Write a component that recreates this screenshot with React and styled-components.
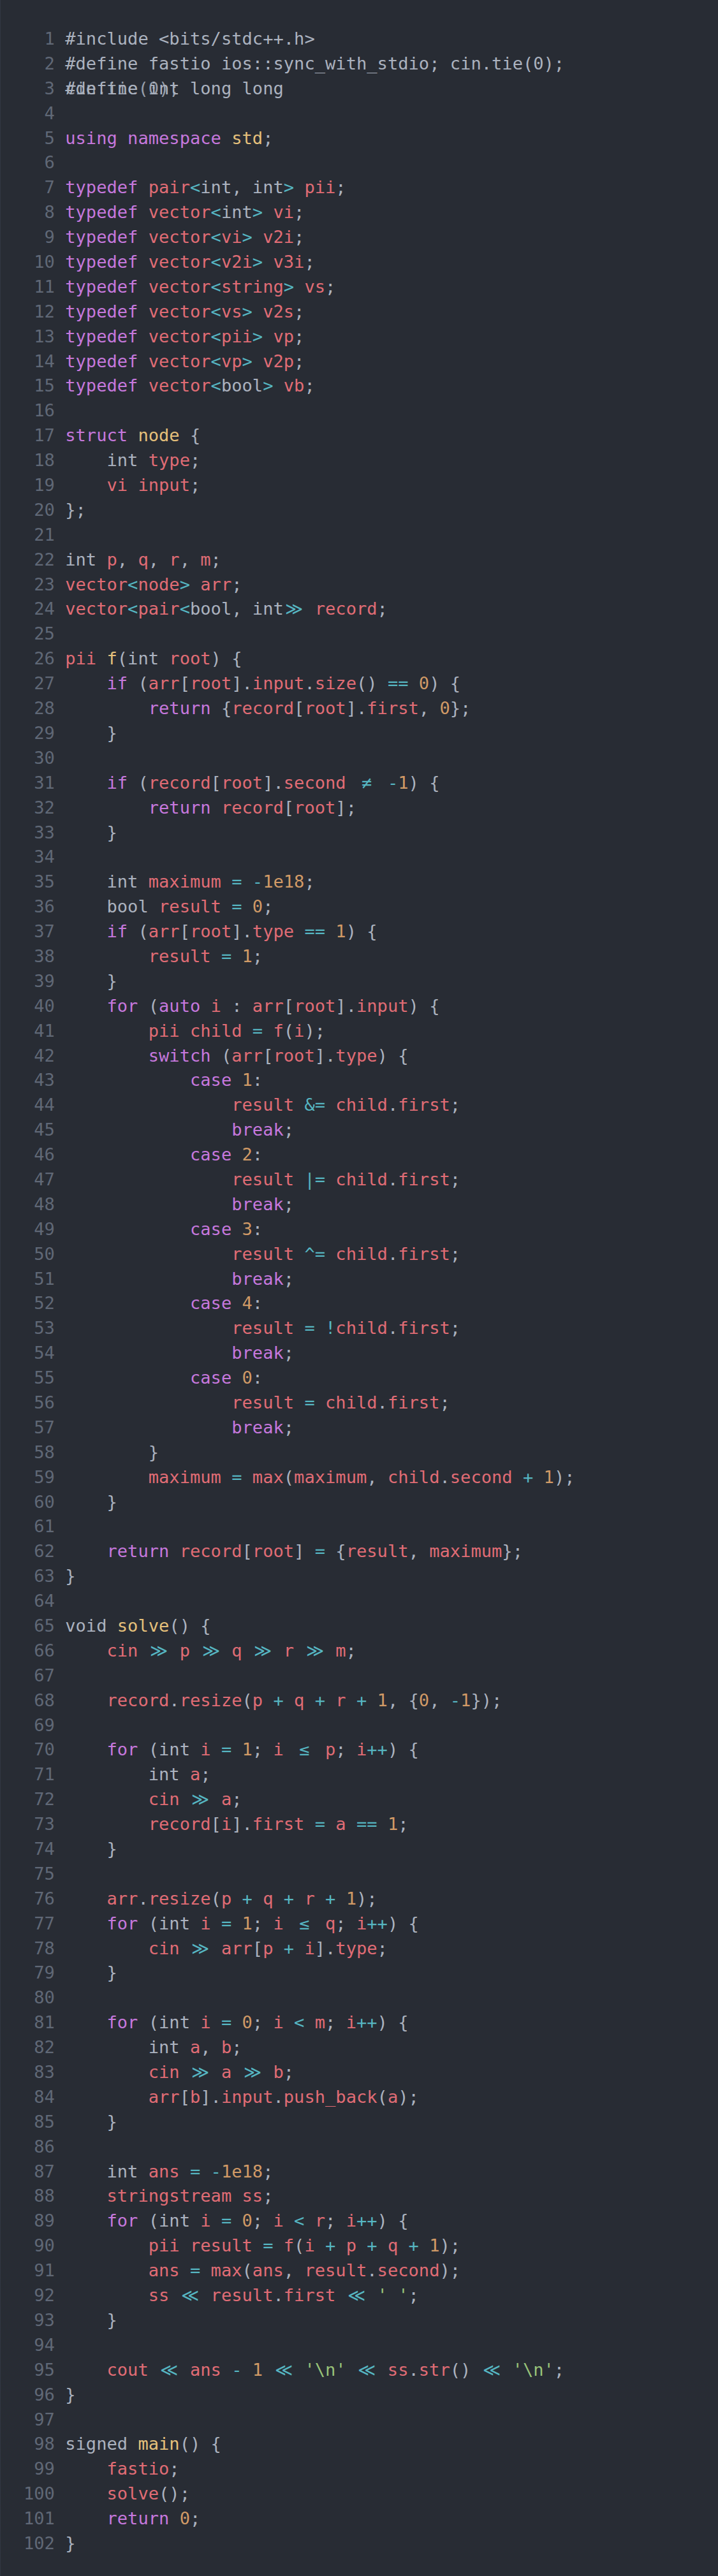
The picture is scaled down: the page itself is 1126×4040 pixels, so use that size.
import React from 'react';
import styled, { createGlobalStyle } from 'styled-components';

const GlobalStyle = createGlobalStyle`
  * {
    box-sizing: border-box;
  }
  html, body {
    margin: 0;
    padding: 0;
    background: #282c34;
  }
`;

const SOURCE = `#include <bits/stdc++.h>
#define fastio ios::sync_with_stdio; cin.tie(0);
#define int long long

using namespace std;

typedef pair<int, int> pii;
typedef vector<int> vi;
typedef vector<vi> v2i;
typedef vector<v2i> v3i;
typedef vector<string> vs;
typedef vector<vs> v2s;
typedef vector<pii> vp;
typedef vector<vp> v2p;
typedef vector<bool> vb;

struct node {
    int type;
    vi input;
};

int p, q, r, m;
vector<node> arr;
vector<pair<bool, int>> record;

pii f(int root) {
    if (arr[root].input.size() == 0) {
        return {record[root].first, 0};
    }

    if (record[root].second != -1) {
        return record[root];
    }

    int maximum = -1e18;
    bool result = 0;
    if (arr[root].type == 1) {
        result = 1;
    }
    for (auto i : arr[root].input) {
        pii child = f(i);
        switch (arr[root].type) {
            case 1:
                result &= child.first;
                break;
            case 2:
                result |= child.first;
                break;
            case 3:
                result ^= child.first;
                break;
            case 4:
                result = !child.first;
                break;
            case 0:
                result = child.first;
                break;
        }
        maximum = max(maximum, child.second + 1);
    }

    return record[root] = {result, maximum};
}

void solve() {
    cin >> p >> q >> r >> m;

    record.resize(p + q + r + 1, {0, -1});

    for (int i = 1; i <= p; i++) {
        int a;
        cin >> a;
        record[i].first = a == 1;
    }

    arr.resize(p + q + r + 1);
    for (int i = 1; i <= q; i++) {
        cin >> arr[p + i].type;
    }

    for (int i = 0; i < m; i++) {
        int a, b;
        cin >> a >> b;
        arr[b].input.push_back(a);
    }

    int ans = -1e18;
    stringstream ss;
    for (int i = 0; i < r; i++) {
        pii result = f(i + p + q + 1);
        ans = max(ans, result.second);
        ss << result.first << ' ';
    }

    cout << ans - 1 << '\\n' << ss.str() << '\\n';
}

signed main() {
    fastio;
    solve();
    return 0;
}`;

const KEYWORDS = new Set([
  'typedef', 'using', 'namespace', 'struct', 'if', 'return', 'for',
  'switch', 'case', 'break', 'auto',
]);
const TYPES = new Set(['int', 'bool', 'void', 'signed', 'long']);
const LIGATURES = { '!=': '≠', '<=': '≤', '<<': '≪', '>>': '≫' };

const COLORS = {
  plain: '#abb2bf',
  keyword: '#c678dd',
  ident: '#e06c75',
  def: '#e5c07b',
  number: '#d19a66',
  op: '#56b6c2',
  string: '#98c379',
};

const tokenRe = /(\s+)|('(?:\\.|[^'])*')|(\d+(?:e\d+)?)|([A-Za-z_]\w*)|(==|!=|<=|>=|<<|>>|\+\+|&=|\|=|\^=|[=<>+\-!&|^])|(.)/g;

// rough C++ highlighter, good enough for this listing
function tokenize(line) {
  if (line.trim().startsWith('#')) return [{ text: line, kind: 'plain' }];
  const out = [];
  const unindented = !/^\s/.test(line);
  let prev = null;
  let m;
  tokenRe.lastIndex = 0;
  while ((m = tokenRe.exec(line))) {
    const [text, ws, str, num, word, op] = m;
    let kind = 'plain';
    if (ws) kind = 'space';
    else if (str) kind = 'string';
    else if (num) kind = 'number';
    else if (word) {
      const next = line[tokenRe.lastIndex];
      if (KEYWORDS.has(word)) kind = 'keyword';
      else if (TYPES.has(word)) kind = 'plain';
      else if (prev && (prev.text === 'struct' || prev.text === 'namespace')) kind = 'def';
      else if (unindented && next === '(' && prev && prev.kind !== 'op') kind = 'def';
      else kind = 'ident';
    } else if (op) kind = 'op';
    const tok = { text, kind };
    out.push(tok);
    if (kind !== 'space') prev = tok;
  }
  return out;
}

const Editor = styled.div`
  min-height: 100vh;
  padding: 42px 0 30px 36px;
  background: #282c34;
  border-left: 1px solid #323843;
  font-family: 'DejaVu Sans Mono', 'Liberation Mono', monospace;
  font-size: 27.1px;
  line-height: 38.9px;
  color: ${COLORS.plain};
`;

const Line = styled.div`
  display: flex;
  gap: 1ch;
  height: 38.9px;
`;

const LineNo = styled.span`
  width: 3ch;
  flex: none;
  text-align: right;
  color: #606876;
`;

const Code = styled.span`
  position: relative;
  white-space: pre;
`;

const Token = styled.span`
  color: ${(p) => COLORS[p.$kind] || COLORS.plain};
`;

const Ligature = styled.span`
  display: inline-block;
  width: 2ch;
  text-align: center;
  color: ${COLORS.op};
`;

const Overlay = styled.span`
  position: absolute;
  left: 0;
  top: 0;
  white-space: pre;
  color: ${COLORS.plain};
  opacity: 0.85;
`;

function CodeLine({ number, text, overlay }) {
  const tokens = tokenize(text);
  return (
    <Line>
      <LineNo>{number}</LineNo>
      <Code>
        {tokens.map((t, i) =>
          t.kind === 'op' && LIGATURES[t.text] ? (
            <Ligature key={i}>{LIGATURES[t.text]}</Ligature>
          ) : (
            <Token key={i} $kind={t.kind}>{t.text}</Token>
          )
        )}
        {overlay && <Overlay>{overlay}</Overlay>}
      </Code>
    </Line>
  );
}

export default function App() {
  const lines = SOURCE.split('\n');
  return (
    <>
      <GlobalStyle />
      <Editor>
        {lines.map((text, i) => (
          <CodeLine
            key={i}
            number={i + 1}
            text={text}
            overlay={i === 2 ? 'cin.tie(0);' : null}
          />
        ))}
      </Editor>
    </>
  );
}
